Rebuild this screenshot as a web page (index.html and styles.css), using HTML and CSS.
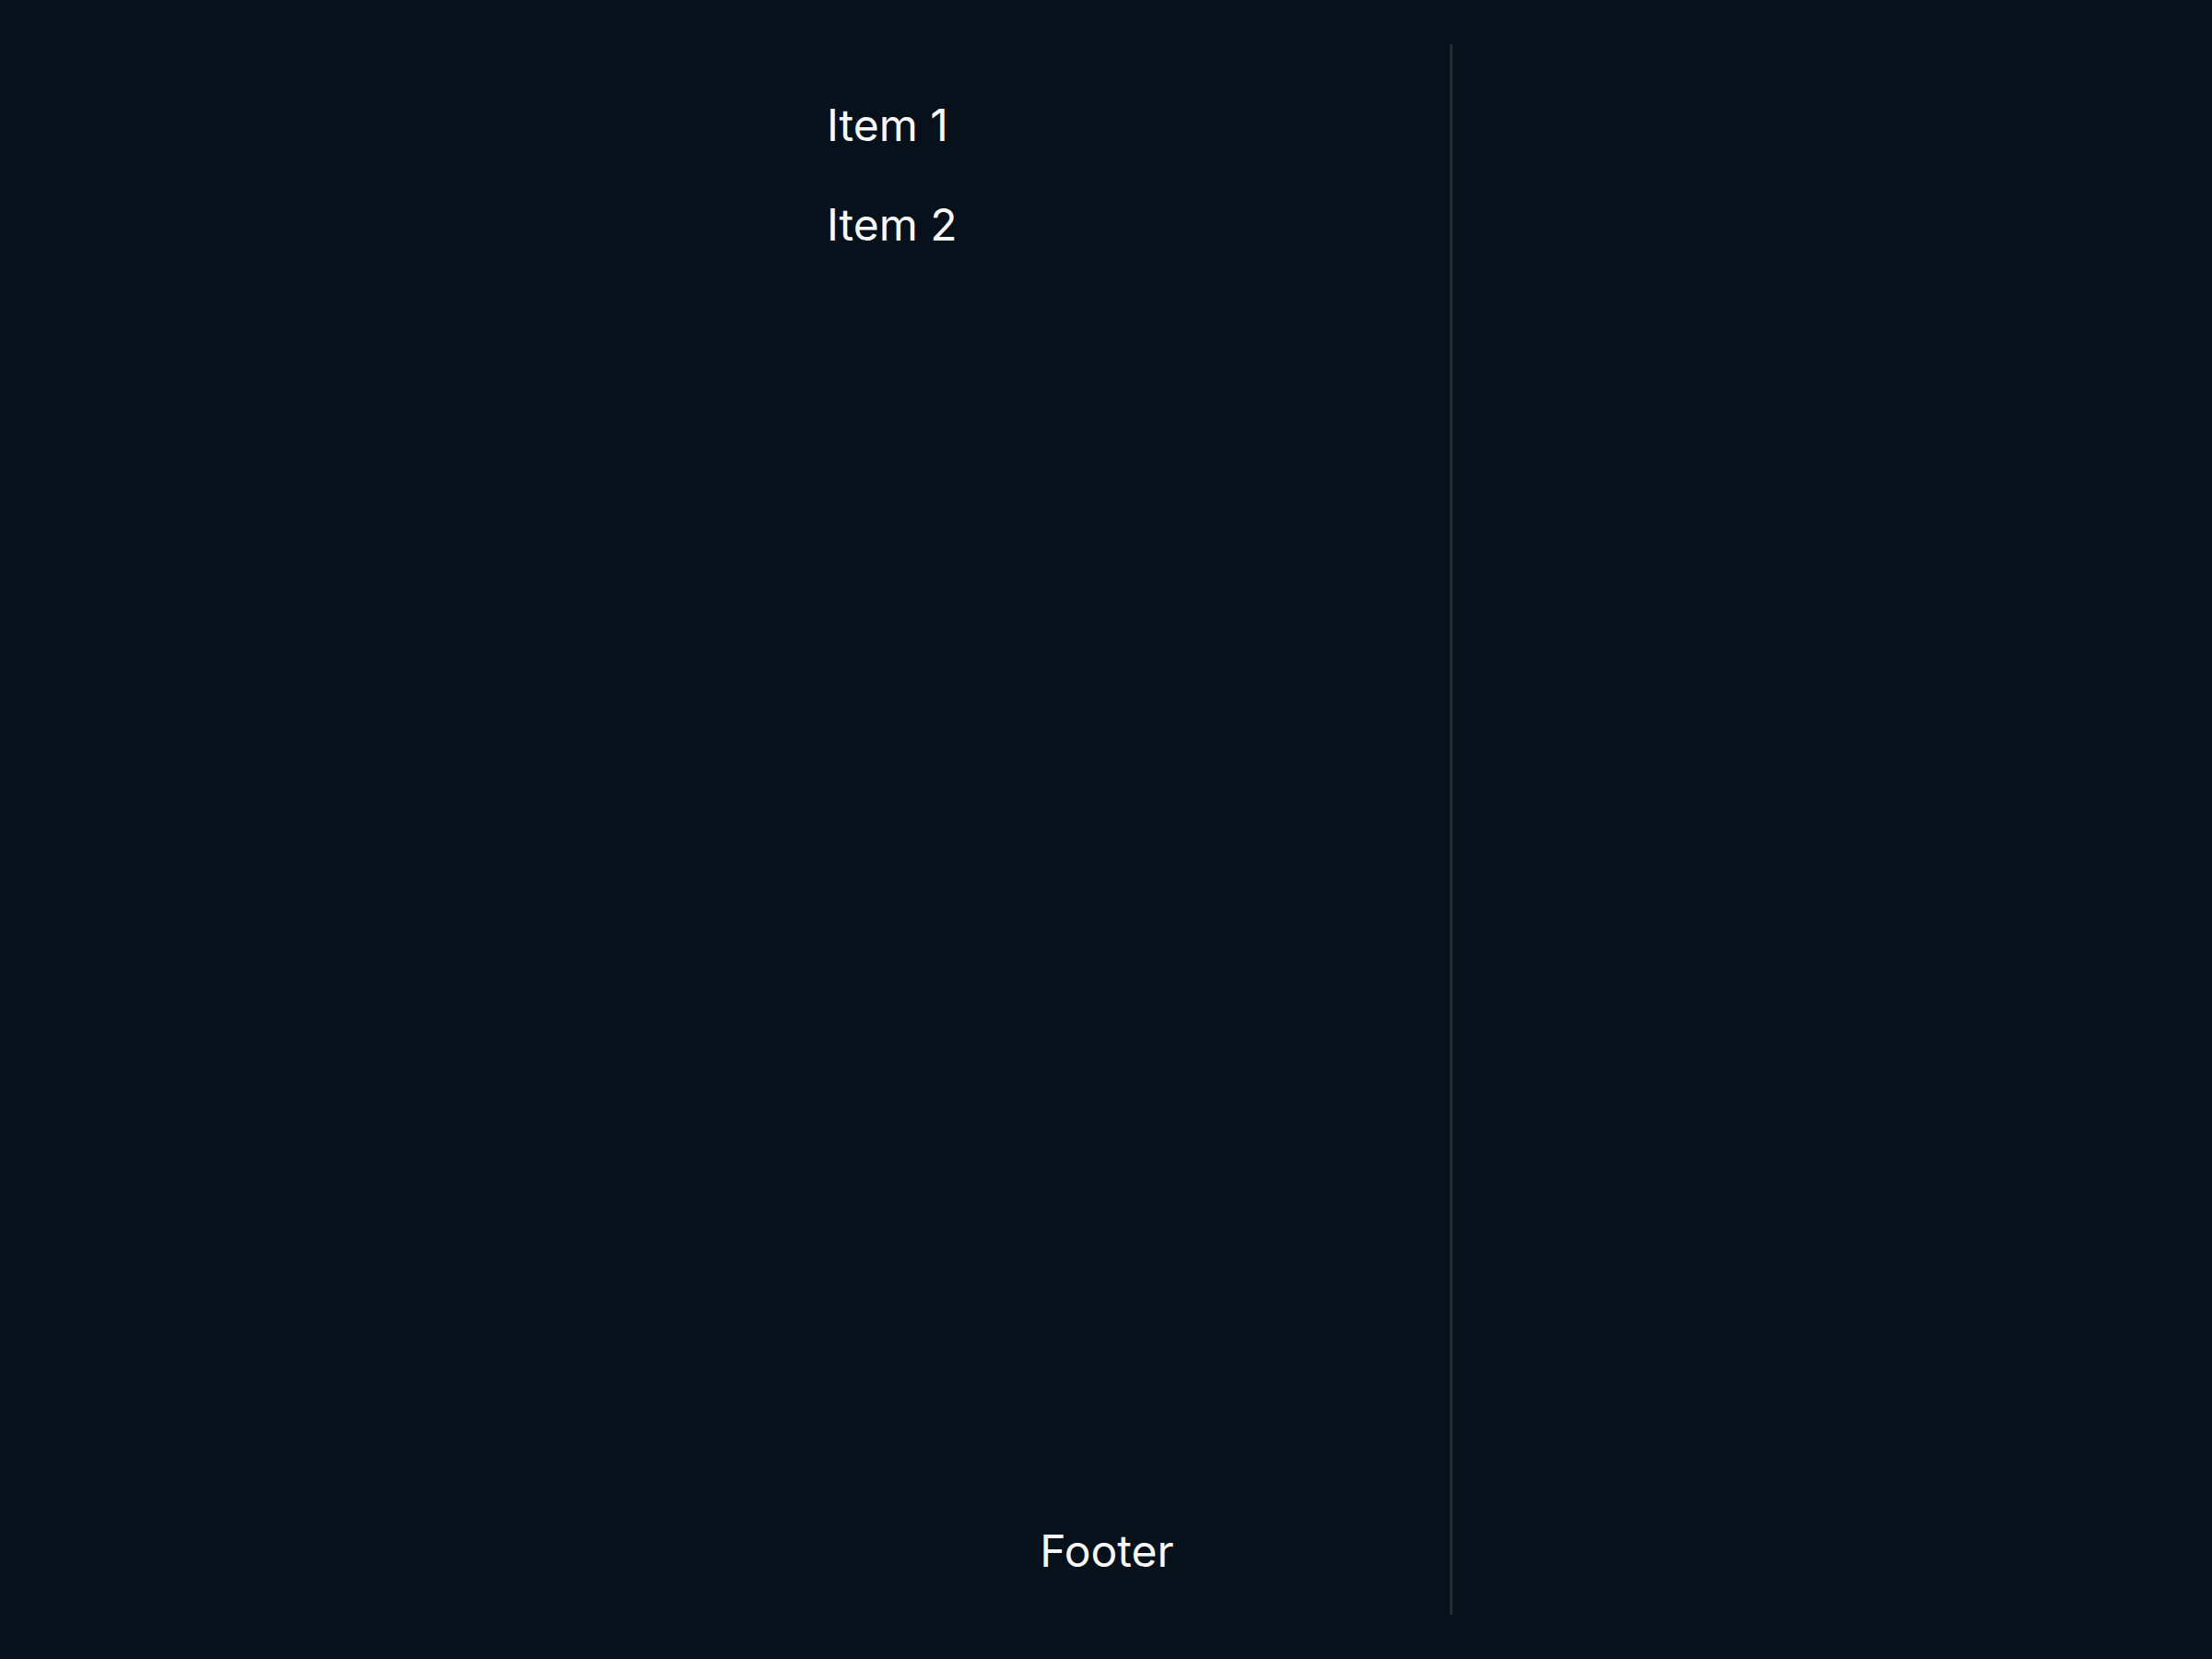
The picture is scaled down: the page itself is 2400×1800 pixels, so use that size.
FILE: index.html
```html
<!DOCTYPE html>
<html lang="en">
<head>
<meta charset="utf-8">
<title>Layout</title>
<link rel="stylesheet" href="styles.css">
</head>
<body>
  <div class="layout">
    <div class="spacer"></div>
    <aside class="panel">
      <nav class="nav">
        <div class="nav-item">Item 1</div>
        <div class="nav-item">Item 2</div>
      </nav>
      <footer class="footer">Footer</footer>
    </aside>
    <main class="content"></main>
  </div>
</body>
</html>
```

FILE: styles.css
```css
html, body {
  margin: 0;
  height: 100%;
}
body {
  background: #07111b;
  color: #f7f7f7;
  font-family: Inter, "Noto Sans", sans-serif;
  box-sizing: border-box;
  padding: 48px;
}
.layout {
  display: grid;
  grid-template-columns: 781px 747px 1fr;
  height: 100%;
}
.panel {
  display: flex;
  flex-direction: column;
  border-right: 3px solid #26292f;
  padding: 59px 0 40px 68px;
}
.nav {
  display: flex;
  flex-direction: column;
  gap: 50px;
  flex: 1;
}
.nav-item {
  font-size: 48px;
  line-height: 58px;
}
.footer {
  font-size: 48px;
  line-height: 58px;
  text-align: center;
  padding-right: 68px;
}
```
